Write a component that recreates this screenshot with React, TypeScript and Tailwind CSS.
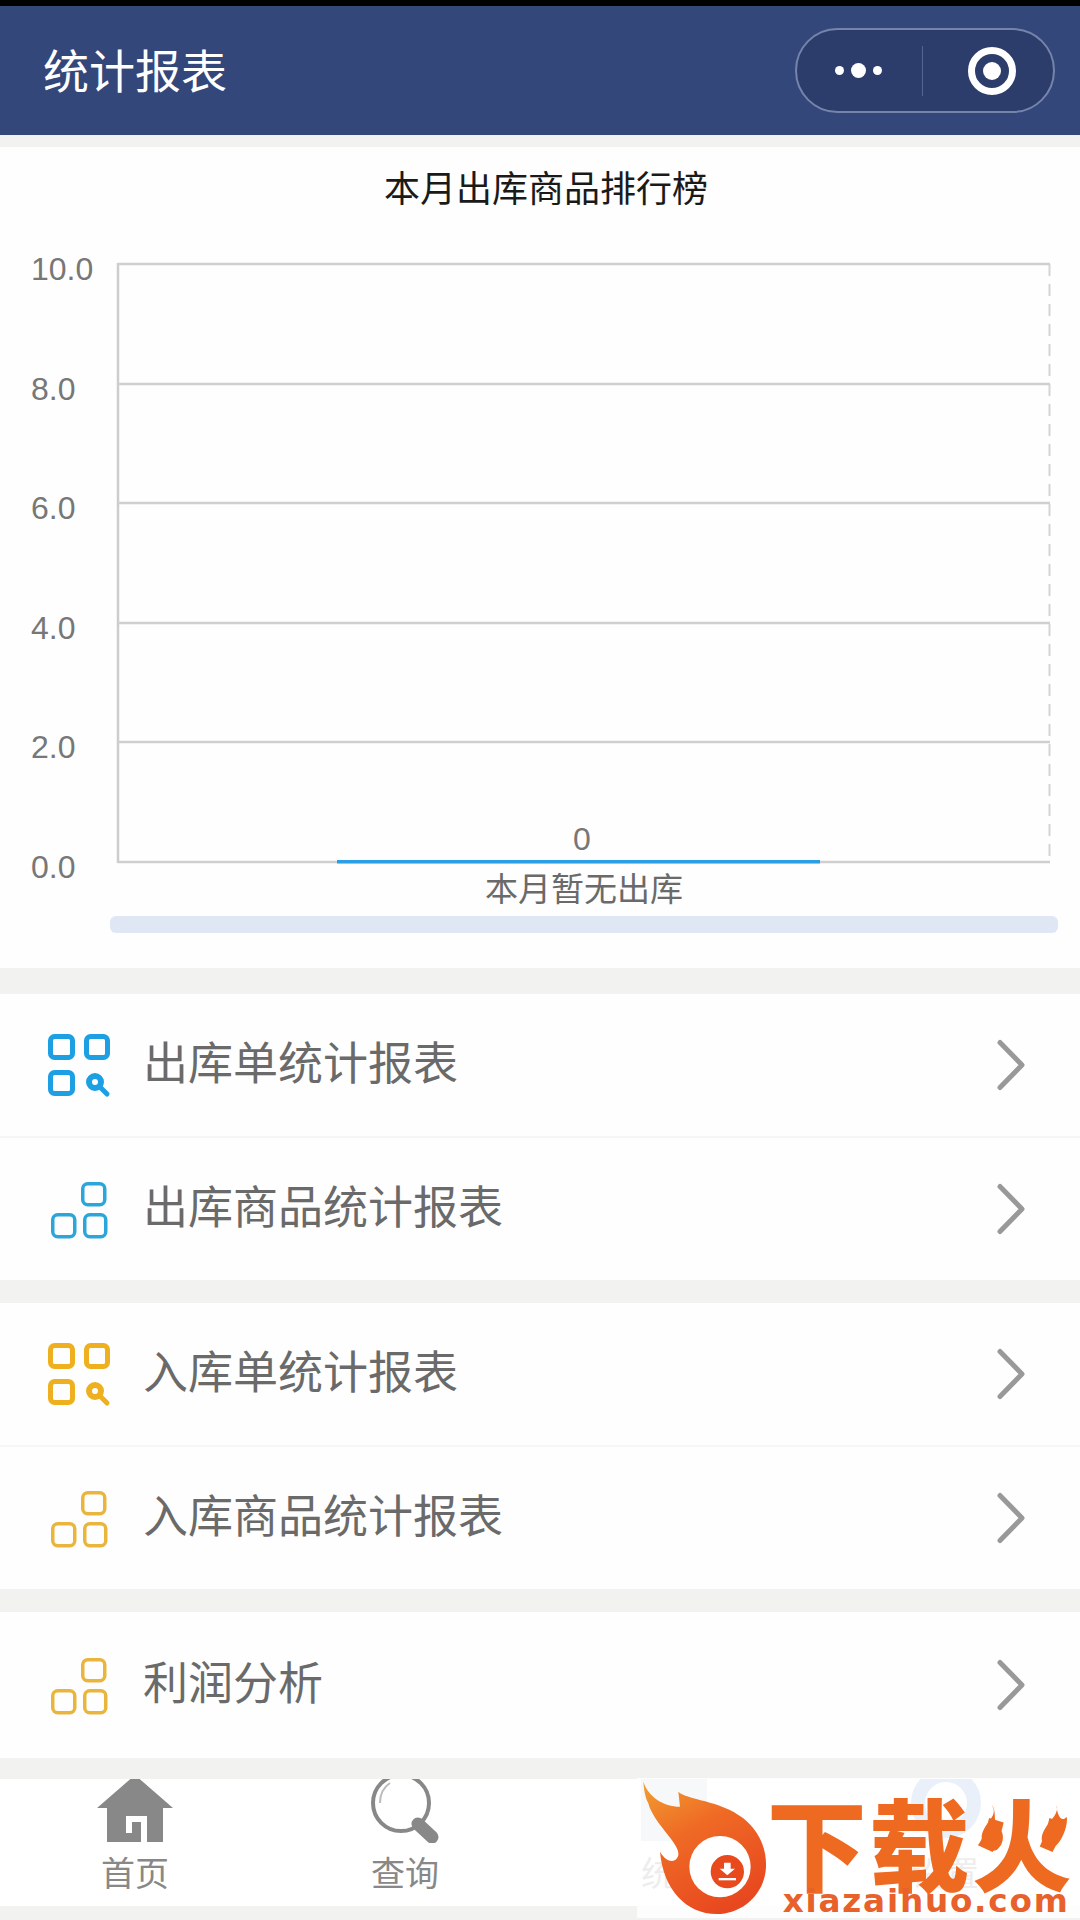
const cjk = "font-['Noto_Sans_CJK_SC','Noto_Sans',sans-serif]";

function Chevron() {
  return (
    <svg width="30" height="52" viewBox="0 0 30 52" className="absolute right-[54px] top-1/2 -translate-y-1/2">
      <path d="M4 3.5 L26 26 L4 48.5" fill="none" stroke="#999" strokeWidth="5" strokeLinecap="round" strokeLinejoin="round" />
    </svg>
  );
}

function SearchGrid({ color }: { color: string }) {
  return (
    <svg width="70" height="70" viewBox="0 0 70 70" fill="none" stroke={color} strokeWidth="5">
      <rect x="6.5" y="6.5" width="22" height="21" rx="4" />
      <rect x="42.5" y="6.5" width="21" height="21" rx="4" />
      <rect x="6.5" y="42.5" width="22" height="21" rx="4" />
      <circle cx="51" cy="52" r="6" strokeWidth="6" />
      <path d="M56 57 L63 64" strokeWidth="5" strokeLinecap="round" />
    </svg>
  );
}

function BlockGrid({ color }: { color: string }) {
  return (
    <svg width="70" height="70" viewBox="0 0 70 70" fill="none" stroke={color} strokeWidth="3.5">
      <rect x="38.75" y="9.75" width="22" height="21" rx="5" />
      <rect x="8.75" y="40.75" width="22" height="22" rx="5" />
      <rect x="40.75" y="40.75" width="21" height="22" rx="5" />
    </svg>
  );
}

function Row({ label, icon, tall }: { label: string; icon: React.ReactNode; tall?: boolean }) {
  return (
    <div className={`relative flex items-center bg-[#fefefe] pl-[44px] ${tall ? "h-[146px]" : "h-[142px]"}`}>
      <div className="w-[99px] shrink-0">{icon}</div>
      <span className={`${cjk} mb-[9px] text-[45px] leading-none text-[#6a6a6a]`}>{label}</span>
      <Chevron />
    </div>
  );
}

function Chart() {
  const grid = [
    { y: 31, t: 47, label: "10.0" },
    { y: 151, t: 167, label: "8.0" },
    { y: 270, t: 286, label: "6.0" },
    { y: 390, t: 406, label: "4.0" },
    { y: 509, t: 525, label: "2.0" },
    { y: 629, t: 645, label: "0.0" },
  ];
  return (
    <svg width="1080" height="735" viewBox="0 0 1080 735" className="block">
      <path d="M1049.5 31 V629" stroke="#d4d4d4" strokeWidth="2" strokeDasharray="12 8" fill="none" />
      <path d="M118 30 V630" stroke="#cdcdcd" strokeWidth="2.5" fill="none" />
      {grid.map((g) => (
        <g key={g.label}>
          <path d={`M118 ${g.y} H1050`} stroke="#cfcfcf" strokeWidth="2.5" fill="none" />
          <text x="31" y={g.t} fontSize="32" fill="#777" fontFamily="'Liberation Sans',sans-serif">{g.label}</text>
        </g>
      ))}
      <rect x="337" y="627" width="483" height="3.5" fill="#2a9fe6" />
      <text x="582" y="617" fontSize="32" textAnchor="middle" fill="#777" fontFamily="'Liberation Sans',sans-serif">0</text>
      <text x="584" y="668" fontSize="33" textAnchor="middle" fill="#6a6a6a" fontFamily="'Noto Sans CJK SC',sans-serif">本月暂无出库</text>
      <rect x="110" y="683" width="948" height="17" rx="6" fill="#dfe6f4" />
    </svg>
  );
}

function HomeIcon() {
  return (
    <svg width="80" height="64" viewBox="0 0 80 64" fill="#888">
      <path d="M40 -4 L78 29 H68 V63 H12 V29 H2 Z" />
      <path d="M31 37 H52 V63 H46 V43 H37 V54 H31 Z" fill="#fff" />
    </svg>
  );
}

function SearchIcon() {
  return (
    <svg width="80" height="64" viewBox="0 0 80 64" fill="none" stroke="#888">
      <circle cx="36" cy="24" r="28" strokeWidth="4" />
      <path d="M15 24 C15 14 19 8 25 4" strokeWidth="2" stroke="#bbb" />
      <path d="M53 45 L67 58" strokeWidth="13" strokeLinecap="round" />
    </svg>
  );
}

function Tab({ label, icon }: { label: string; icon: React.ReactNode }) {
  return (
    <div className="flex flex-1 flex-col items-center">
      <div className="h-[64px] overflow-hidden">{icon}</div>
      <span className={`${cjk} mt-[11px] text-[34px] leading-[36px] text-[#888]`}>{label}</span>
    </div>
  );
}

function Logo() {
  return (
    <div className="absolute left-[637px] top-[1778px] h-[140px] w-[443px] bg-white/85">
      <svg width="443" height="140" viewBox="51 54 1329 420" className="block">
        <defs>
          <linearGradient id="fl" x1="0.1" y1="0" x2="0.6" y2="1">
            <stop offset="0" stopColor="#f19a30" />
            <stop offset="0.4" stopColor="#ef6a25" />
            <stop offset="1" stopColor="#e8481f" />
          </linearGradient>
        </defs>
        <path
          d="M70 65 C85 110 130 140 180 140 L175 95 C200 120 300 120 370 175 C420 215 440 270 438 320 C435 400 370 462 290 462 C200 462 130 390 120 275 C140 310 170 310 175 285 C180 250 100 190 85 130 C75 110 72 90 70 65 Z"
          fill="url(#fl)"
        />
        <circle cx="300" cy="320" r="92" fill="#fff" />
        <circle cx="322" cy="335" r="50" fill="#e8491d" />
        <path d="M312 308 H332 V326 H345 L322 346 L299 326 H312 Z" fill="#fff" />
        <rect x="296" y="354" width="52" height="7" fill="#fff" />
        <text x="440" y="372" fontSize="300" fontWeight="900" fill="#ee6a21" textLength="915" lengthAdjust="spacing" fontFamily="'Noto Sans CJK SC',sans-serif">下载火</text>
        <path d="M1115 135 C1140 170 1085 190 1085 235 C1085 262 1110 278 1130 270 C1150 255 1160 220 1130 195 C1120 180 1130 150 1115 135 Z" fill="#ee6a21" />
        <path d="M1310 135 C1320 170 1270 190 1265 235 C1265 262 1290 265 1310 255 C1330 235 1345 190 1340 170 C1325 190 1310 165 1310 135 Z" fill="#ee6a21" />
        <text x="488" y="455" fontSize="98" fontWeight="700" fill="#e8602a" textLength="855" lengthAdjust="spacing" fontFamily="'DejaVu Sans',sans-serif">xiazaihuo.com</text>
      </svg>
    </div>
  );
}

export default function App() {
  return (
    <div className={`${cjk} relative flex h-[1920px] w-[1080px] flex-col overflow-hidden bg-[#f2f2f0]`}>
      <div className="h-[6px] bg-black" />
      <header className="flex h-[129px] items-center justify-between bg-[#33477a] pl-[43px] pr-[25px]">
        <h1 className="mb-[5px] text-[46px] leading-none font-normal text-white">统计报表</h1>
        <div className="flex h-[85px] w-[260px] items-center rounded-full border-2 border-[#7584aa] bg-[#2c3d6c]">
          <div className="flex flex-1 items-center justify-center gap-[7px] pr-[3px]">
            <span className="h-[9px] w-[9px] rounded-full bg-white" />
            <span className="h-[15px] w-[15px] rounded-full bg-white" />
            <span className="h-[9px] w-[9px] rounded-full bg-white" />
          </div>
          <div className="h-[50px] w-px bg-[#55658f]" />
          <div className="flex flex-1 items-center justify-center pl-[8px]">
            <span className="flex h-[48px] w-[48px] items-center justify-center rounded-full border-[7px] border-white">
              <span className="h-[18px] w-[18px] rounded-full bg-white" />
            </span>
          </div>
        </div>
      </header>

      <section className="mt-[12px] h-[821px] bg-[#fefefe]">
        <div className="flex h-[86px] items-center justify-center pb-[8px] pl-[12px] text-[36px] leading-none text-[#1a1a1a]">本月出库商品排行榜</div>
        <Chart />
      </section>

      <section className="mt-[26px] flex flex-col gap-[2px] bg-[#f6f6f5]">
        <Row label="出库单统计报表" icon={<SearchGrid color="#1d9fe3" />} />
        <Row label="出库商品统计报表" icon={<BlockGrid color="#2aa6da" />} />
      </section>

      <section className="mt-[23px] flex flex-col gap-[2px] bg-[#f6f6f5]">
        <Row label="入库单统计报表" icon={<SearchGrid color="#efb01f" />} />
        <Row label="入库商品统计报表" icon={<BlockGrid color="#e9b53c" />} />
      </section>

      <section className="mt-[23px]">
        <Row tall label="利润分析" icon={<BlockGrid color="#e9b53c" />} />
      </section>

      <nav className="mt-[21px] flex h-[127px] bg-white">
        <Tab label="首页" icon={<HomeIcon />} />
        <Tab label="查询" icon={<SearchIcon />} />
        <Tab label="统计" icon={
          <svg width="80" height="64" viewBox="0 0 80 64"><rect x="6" y="0" width="66" height="62" fill="#c4cedb" /></svg>
        } />
        <Tab label="设置" icon={
          <svg width="80" height="64" viewBox="0 0 80 64" fill="none"><circle cx="41" cy="24" r="28" stroke="#6f9cda" strokeWidth="14" /></svg>
        } />
      </nav>
      <Logo />
    </div>
  );
}
